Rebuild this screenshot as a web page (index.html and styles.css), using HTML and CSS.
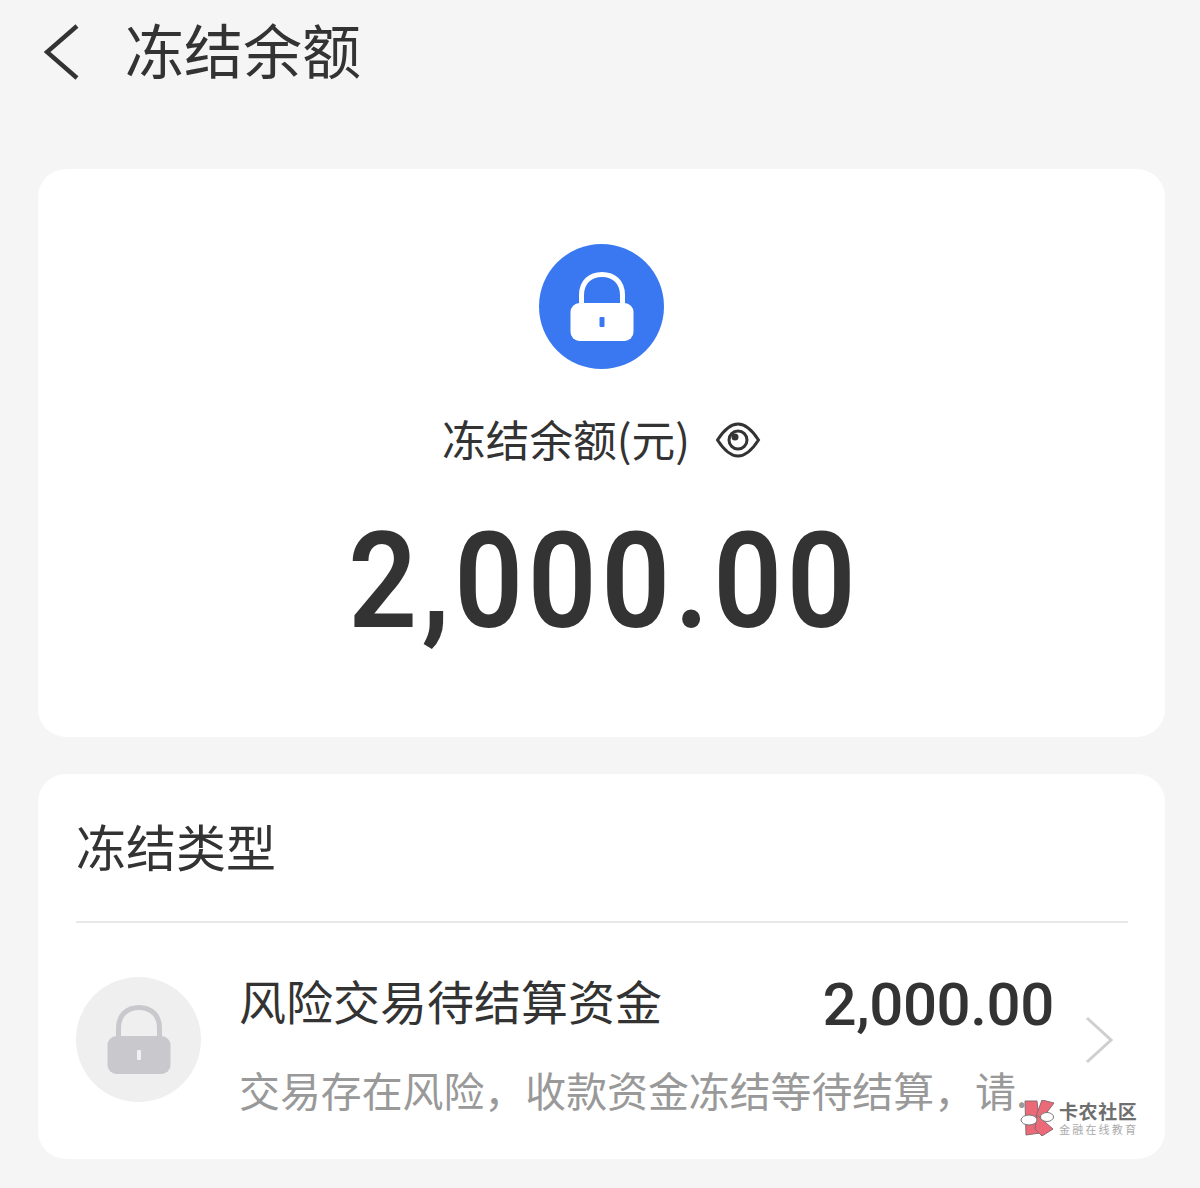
FILE: index.html
```html
<!DOCTYPE html>
<html lang="zh">
<head>
<meta charset="utf-8">
<title>冻结余额</title>
<link rel="stylesheet" href="styles.css">
</head>
<body>
<div class="page">
  <header class="topbar">
    <svg class="back" viewBox="0 0 36 58" fill="none"><path d="M33 3 3 29l30 26" stroke="#333" stroke-width="4.4"/></svg>
    <h1 class="title">冻结余额</h1>
  </header>

  <section class="card hero">
    <div class="lock-circle blue">
      <svg class="lock" viewBox="0 0 64 70"><path d="M11.500 34V23C11.500 10 20 2.500 32 2.500S52.500 10 52.500 23v11" fill="none" stroke="#fff" stroke-width="5"/><rect x="0.500" y="31" width="63" height="38" rx="9" fill="#fff"/><rect x="29.500" y="45" width="5" height="10" rx="1" fill="#3a78f2"/></svg>
    </div>
    <div class="label-row">
      <span class="label">冻结余额(元)</span>
      <svg class="eye" viewBox="0 0 46 38" fill="none"><path d="M2.500 19C7 12 14 3 23 3s16 9 20.500 16C39 26 32 35 23 35S7 26 2.500 19Z" stroke="#333" stroke-width="3"/><circle cx="23" cy="19" r="9" stroke="#333" stroke-width="3"/><circle cx="20" cy="16" r="3.500" fill="#333"/></svg>
    </div>
    <div class="amount">2,000.00</div>
  </section>

  <section class="card detail">
    <h2 class="section-title">冻结类型</h2>
    <div class="row">
      <div class="lock-circle grey">
        <svg class="lock" viewBox="0 0 64 70"><path d="M11.500 34V23C11.500 10 20 2.500 32 2.500S52.500 10 52.500 23v11" fill="none" stroke="#c9c8cc" stroke-width="5"/><rect x="0.500" y="31" width="63" height="38" rx="9" fill="#c9c8cc"/><rect x="30" y="45" width="4" height="10" rx="1" fill="#f1f1f2"/></svg>
      </div>
      <div class="row-body">
        <div class="row-head">
          <span class="row-name">风险交易待结算资金</span>
          <span class="row-amount">2,000.00</span>
        </div>
        <div class="row-desc">交易存在风险，收款资金冻结等待结算，请.</div>
      </div>
      <svg class="chev" viewBox="0 0 28 48" fill="none"><path d="M2 2l24 22L2 46" stroke="#cfcfcf" stroke-width="3"/></svg>
    </div>
    <div class="watermark">
      <svg class="wm-logo" viewBox="0 0 36 36">
        <path d="M5 1h12l3 32-14 2Z" fill="#ec6a78" stroke="#8a6a6e"/>
        <path d="M22 0l12 3-16 21-2-8Z" fill="#ec6a78" stroke="#8a6a6e"/>
        <path d="M17 15l16 14-11 7-7-7Z" fill="#ec6a78" stroke="#8a6a6e"/>
        <ellipse cx="9" cy="20" rx="8" ry="5" fill="#fff" stroke="#777"/>
        <ellipse cx="27" cy="17" rx="6.500" ry="4.500" fill="#fff" stroke="#777"/>
      </svg>
      <div class="wm-text">
        <div class="wm-main">卡农社区</div>
        <div class="wm-sub">金融在线教育</div>
      </div>
    </div>
  </section>
</div>
</body>
</html>
```
FILE: styles.css
```css
* { box-sizing: border-box; }
html, body { margin: 0; padding: 0; }
body {
  background: #f5f5f5;
  color: #333;
  font-family: "Noto Sans CJK SC", "Noto Sans", sans-serif;
}
.page {
  width: 1200px;
  height: 1188px;
  overflow: hidden;
  padding: 0 35px 0 38px;
  display: flex;
  flex-direction: column;
}
.topbar {
  height: 103px;
  margin-left: 6px;
  display: flex;
  align-items: center;
  gap: 45px;
}
.back { width: 36px; height: 58px; flex: none; }
.title {
  margin: 0 0 7px;
  font-size: 59px;
  font-weight: 400;
  line-height: 1;
  color: #333;
}
.card {
  background: #fff;
  border-radius: 28px;
}
.hero {
  margin-top: 66px;
  height: 568px;
  padding-top: 75px;
  display: flex;
  flex-direction: column;
  align-items: center;
}
.lock-circle {
  width: 125px;
  height: 125px;
  flex: none;
  border-radius: 50%;
  display: flex;
  align-items: center;
  justify-content: center;
}
.blue { background: #3a78f2; }
.grey { background: #efeff0; }
.lock { width: 64px; height: 70px; }
.label-row {
  margin-top: 41px;
  height: 60px;
  display: flex;
  align-items: center;
  gap: 25px;
}
.label { font-size: 43.700px; line-height: 60px; color: #333; margin-bottom: 4px; }
.eye { width: 46px; height: 38px; }
.amount {
  margin-top: 32px;
  padding-left: 6px;
  font-family: Roboto, sans-serif;
  font-weight: 600;
  font-size: 134px;
  line-height: 160px;
  color: #333;
  letter-spacing: 5px;
  transform: scaleX(0.9);
}
.detail {
  position: relative;
  margin-top: 37px;
  height: 385px;
  padding: 0 37px 0 38px;
}
.section-title {
  margin: 0;
  height: 149px;
  padding-top: 41px;
  border-bottom: 2px solid #e8e8e8;
  font-size: 50px;
  font-weight: 400;
  line-height: 60px;
  color: #333;
}
.row {
  margin-top: 54px;
  display: flex;
  align-items: center;
}
.row-body {
  margin-left: 38px;
  width: 815px;
  height: 125px;
  flex: none;
}
.row-head {
  display: flex;
  justify-content: space-between;
  align-items: center;
  height: 60px;
}
.row-name { font-size: 47px; line-height: 60px; color: #333; margin-bottom: 15px; }
.row-amount {
  font-family: Roboto, sans-serif;
  font-weight: 500;
  font-size: 60px;
  line-height: 60px;
  letter-spacing: -0.4px;
  color: #333;
  margin-bottom: 5px;
}
.row-desc {
  margin-top: 27px;
  font-size: 40.900px;
  line-height: 52px;
  color: #999;
  white-space: nowrap;
}
.chev { width: 28px; height: 48px; margin-left: 31px; flex: none; }
.watermark {
  position: absolute;
  left: 982px;
  top: 326px;
  display: flex;
  align-items: center;
  gap: 3px;
}
.wm-logo { width: 36px; height: 36px; }
.wm-text { color: #6f6f6f; }
.wm-main { font-size: 19px; line-height: 22px; letter-spacing: 0.6px; font-weight: 700; }
.wm-sub { font-size: 11px; line-height: 14px; letter-spacing: 2.200px; color: #aaa; }
```
